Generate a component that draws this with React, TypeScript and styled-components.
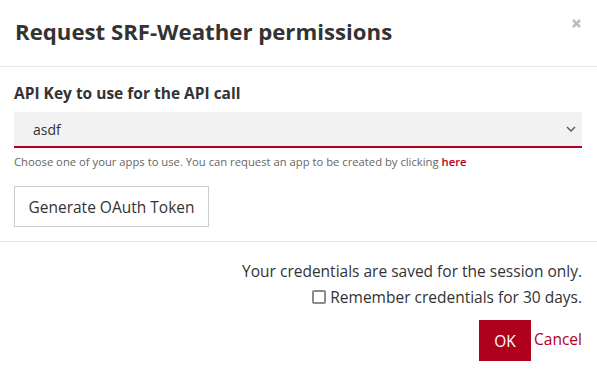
import React from "react";
import styled, { createGlobalStyle } from "styled-components";

const GlobalStyle = createGlobalStyle`
  html, body { margin: 0; padding: 0; background: #ffffff; }
  body { font-family: "Open Sans", "Noto Sans", sans-serif; color: #333333; }
  * { box-sizing: border-box; }
`;

const Modal = styled.div`
  width: 597px;
  height: 376px;
  background: #ffffff;
  display: flex;
  flex-direction: column;
`;

const Header = styled.div`
  position: relative;
  padding: 19px 15px 21px;
  border-bottom: 1px solid #e5e5e5;
`;

const Title = styled.h3`
  margin: 0;
  font-size: 22.2px;
  line-height: 26px;
  font-weight: 700;
  color: #333333;
`;

const Close = styled.button`
  position: absolute;
  top: 14px;
  right: 15px;
  width: 12px;
  height: 18px;
  padding: 0;
  border: 0;
  background: none;
  display: flex;
  align-items: center;
  justify-content: center;
  cursor: pointer;
`;

const Body = styled.div`
  padding: 16px 15px 14px 14px;
  border-bottom: 1px solid #e5e5e5;
  display: flex;
  flex-direction: column;
  align-items: flex-start;
`;

const Label = styled.label`
  font-size: 15.5px;
  line-height: 20px;
  font-weight: 700;
  color: #333333;
  margin-bottom: 9px;
`;

const SelectBox = styled.div`
  align-self: stretch;
  height: 36px;
  background: #f2f2f2;
  border-bottom: 2px solid #af001d;
  display: flex;
  align-items: center;
  justify-content: space-between;
  padding: 0 5px 0 19px;
  font-size: 14px;
  color: #333333;
`;

const Help = styled.p`
  margin: 6px 0 0;
  font-size: 11.25px;
  line-height: 16px;
  color: #666666;
`;

const Link = styled.a`
  color: #af001d;
  font-weight: 600;
  text-decoration: none;
`;

const SecondaryButton = styled.button`
  margin-top: 16px;
  height: 41px;
  width: 195px;
  padding: 0;
  border: 1px solid #cccccc;
  background: #ffffff;
  font-family: inherit;
  font-size: 15.5px;
  color: #333333;
  cursor: pointer;
`;

const Footer = styled.div`
  padding: 19px 15px 0;
  display: flex;
  flex-direction: column;
  align-items: flex-end;
  font-size: 15.5px;
  line-height: 20px;
  color: #333333;
`;

const Line = styled.div``;

const CheckLabel = styled.label`
  display: flex;
  align-items: center;
  gap: 4px;
  margin-top: 6px;
`;

const Check = styled.span`
  width: 14px;
  height: 14px;
  border: 2px solid #8a8a8f;
  border-radius: 2px;
  background: #ffffff;
`;

const Actions = styled.div`
  margin-top: 13px;
  display: flex;
  align-items: center;
  gap: 3px;
`;

const Primary = styled.button`
  height: 41px;
  width: 52px;
  padding: 0;
  border: 0;
  background: #af001d;
  color: #ffffff;
  font-family: inherit;
  font-size: 15.5px;
  cursor: pointer;
`;

const TextButton = styled.button`
  border: 0;
  background: none;
  padding: 0 0 3px;
  color: #af001d;
  font-family: inherit;
  font-size: 15.5px;
  cursor: pointer;
`;

export default function App() {
  return (
    <>
      <GlobalStyle />
      <Modal>
        <Header>
          <Title>Request SRF-Weather permissions</Title>
          <Close aria-label="Close">
            <svg width="9" height="9" viewBox="0 0 9 9">
              <path d="M1 1 L8 8 M8 1 L1 8" stroke="#bdbdbd" strokeWidth="2.6" strokeLinecap="butt" />
            </svg>
          </Close>
        </Header>
        <Body>
          <Label>API Key to use for the API call</Label>
          <SelectBox>
            <span>asdf</span>
            <svg width="12" height="8" viewBox="0 0 12 8">
              <path d="M2 2 L6 6 L10 2" fill="none" stroke="#555" strokeWidth="1.4" />
            </svg>
          </SelectBox>
          <Help>
            Choose one of your apps to use. You can request an app to be created by clicking{" "}
            <Link href="#">here</Link>
          </Help>
          <SecondaryButton>Generate OAuth Token</SecondaryButton>
        </Body>
        <Footer>
          <Line>Your credentials are saved for the session only.</Line>
          <CheckLabel>
            <Check />
            Remember credentials for 30 days.
          </CheckLabel>
          <Actions>
            <Primary>OK</Primary>
            <TextButton>Cancel</TextButton>
          </Actions>
        </Footer>
      </Modal>
    </>
  );
}
